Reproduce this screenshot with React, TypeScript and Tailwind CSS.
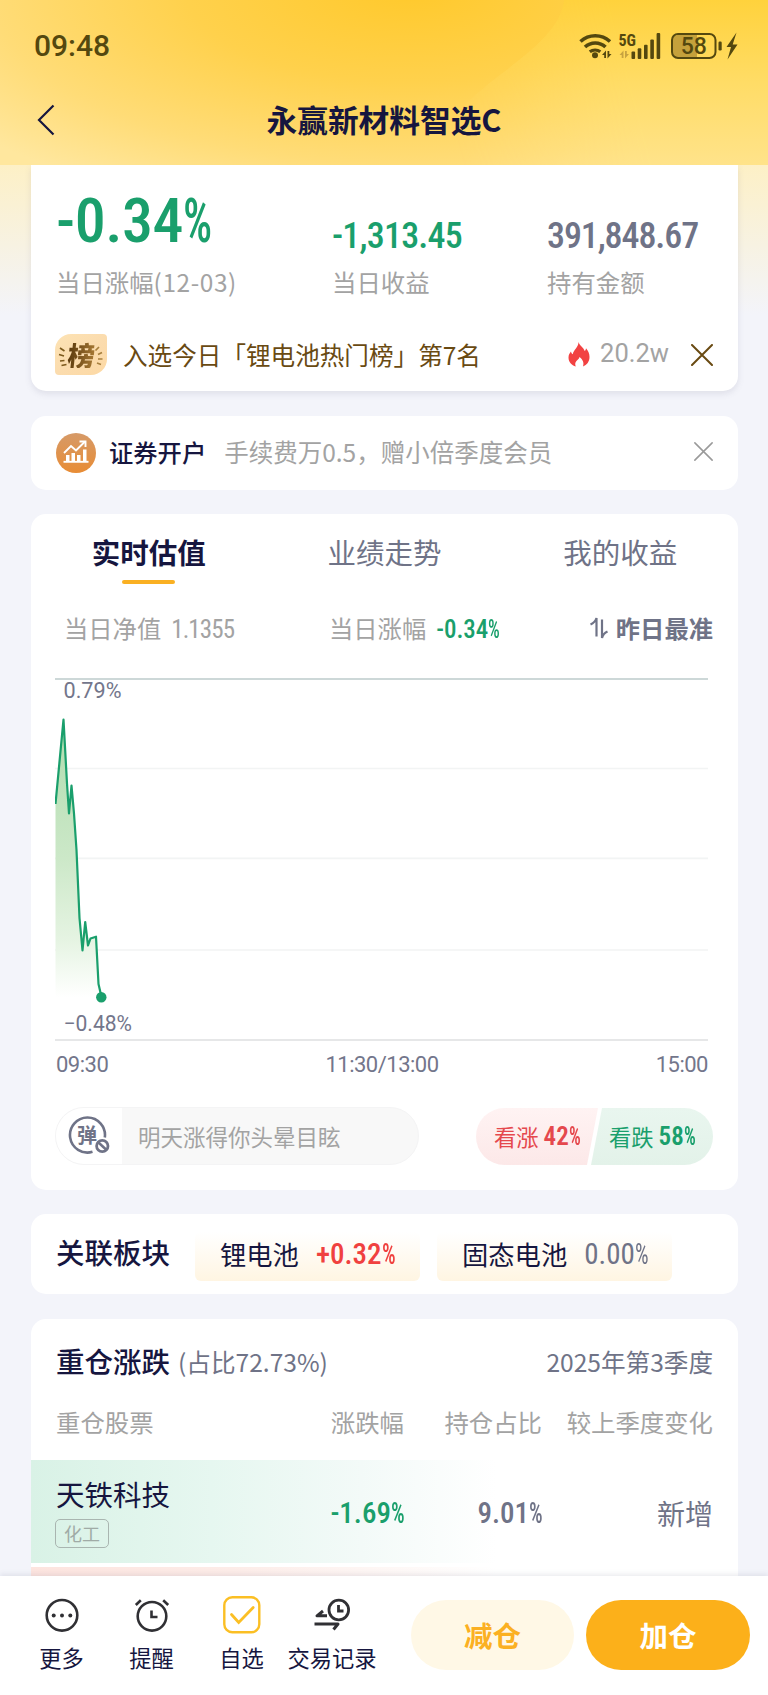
import type { ReactNode } from "react";

function StatusIcons() {
  return (
    <svg className="mb-[2px]" width="162" height="32" viewBox="576 28 162 32" fill="none">
      <g stroke="#54480f" strokeWidth="3.6">
        <path d="M580.5 40.5a22 22 0 0 1 29.5 0" />
        <path d="M585 46a15 15 0 0 1 20.5 0" />
        <path d="M589.8 50.8a8.5 8.5 0 0 1 10.5 0" strokeWidth="3.2" />
      </g>
      <circle cx="595" cy="54.3" r="3" fill="#54480f" />
      <path d="M602 54l4-4.500v7.500h-1.800v-3zM611.500 53l-4 4.500v-7.500h1.800v3z" fill="#54480f" />
      <path d="M619.500 54l4-4.500v7.500h-1.800v-3zM629 53l-4 4.500v-7.500h1.800v3z" fill="#c7a340" />
      <text x="618.500" y="45" fontSize="17" fontWeight="700" fontFamily="Roboto Condensed" fill="#54480f" textLength="17.500" lengthAdjust="spacingAndGlyphs">5G</text>
      <g fill="#54480f">
        <rect x="631.500" y="50.500" width="3.600" height="7.500" rx="1" />
        <rect x="637.700" y="47.300" width="3.600" height="10.700" rx="1" />
        <rect x="644" y="43.800" width="3.600" height="14.200" rx="1" />
        <rect x="650.300" y="38.500" width="3.600" height="19.500" rx="1" />
        <rect x="656.600" y="32" width="3.600" height="26" rx="1" />
      </g>
      <path d="M678 34h19v23h-19a5.500 5.500 0 0 1-5.500-5.500v-12a5.500 5.500 0 0 1 5.500-5.500z" fill="#c5a13b" />
      <rect x="672" y="33" width="43.500" height="24" rx="6" stroke="#54480f" strokeWidth="2" />
      <rect x="718.500" y="40.500" width="3.200" height="9" rx="1.200" fill="#54480f" />
      <text x="693.800" y="53.300" fontSize="23" fontWeight="500" fontFamily="Roboto" fill="#54480f" textAnchor="middle" textLength="26">58</text>
      <path d="M736.500 31.500l-10 14.500h4.500l-3.500 12.500 10-15h-4.800z" fill="#54480f" />
    </svg>
  );
}

function Cross({ className }: { className: string }) {
  return (
    <svg className={className} viewBox="0 0 22 22" fill="none" stroke="currentColor" strokeLinecap="round">
      <path d="M1 1l20 20M21 1L1 21" />
    </svg>
  );
}

function Percent() {
  return <span className="inline-block w-[0.45em] origin-left scale-x-[.74] tracking-normal">%</span>;
}

function RankBadge() {
  return (
    <div className="relative flex h-[41px] w-[52px] items-center justify-center rounded-tl-[16px] rounded-tr-[4px] rounded-br-[16px] rounded-bl-[4px] bg-linear-to-br from-[#fde3b4] via-[#fbdcae] to-[#fdd9a4]">
      <svg className="absolute inset-0" width="52" height="41" viewBox="0 0 52 41" stroke="#7d5a1c" strokeWidth="1.700" fill="none">
        <path d="M5 14l4.500 3M4 20.500l5 1.500M5 27l4.500-.5M6.500 31.500l5-1" />
        <path stroke="#a8803f" d="M44 13l-3.500 3.500M47 18.500l-4 2M47.500 25h-4.500M46 30.500l-4-1.500" />
      </svg>
      <span className="relative -skew-x-6 bg-linear-to-r from-[#5b3a0c] to-[#a87a35] bg-clip-text text-[27px] leading-none font-black text-transparent">榜</span>
    </div>
  );
}

function Flame() {
  return (
    <svg width="22" height="25" viewBox="0 0 22 25">
      <path d="M10.500 0c1 3.500 5 5.500 6.200 9 .9-.5 1.200-1.500 1.300-2.700 2.200 2.300 3.500 5.500 3.500 8.700 0 4.500-2.600 8-6.500 9.500 1.300-3.800-.2-6.800-3.500-9.500-.2 2-3.200 3.200-4 5.500-.5 1.400-.2 2.800.3 4C3.600 23.300.5 20 .5 15.500c0-3 1.300-4.500 2.500-6 .3 1.500.8 2.300 1.800 2.800C5.500 7.500 10.500 5.500 10.500 0z" fill="#f24242" />
    </svg>
  );
}

function BrokerIcon() {
  return (
    <svg width="40" height="40" viewBox="0 0 40 40">
      <defs>
        <linearGradient id="broker" x1="0.500" y1="0" x2="0.500" y2="1">
          <stop offset="0" stopColor="#d69a68" />
          <stop offset="1" stopColor="#e88c35" />
        </linearGradient>
      </defs>
      <circle cx="20" cy="20" r="20" fill="url(#broker)" />
      <g fill="none" stroke="#fff" strokeWidth="1.900">
        <path d="M8 20l7-7 5 4.500 9-9" />
        <path d="M23.500 8.500h6V14" />
        <path d="M7.500 28.800h25" />
      </g>
      <path d="M10 22h3.500v6.500H10zM15.500 20H19v8.500h-3.500zM21 22h3.500v6.500H21zM27 16.500h3.500v12H27z" fill="#fff" />
    </svg>
  );
}

function ValuationChart() {
  const points = "55.500 804L63.500 719.500L67 783.500L69 813.500L71.500 785.500L74 813.500L76.500 850L79.500 918L82.500 950.500L85.200 922L88 945.500L90.500 938.500L96 936.700L98.500 984L101.500 997";
  return (
    <svg className="block" width="654" height="364" viewBox="55 678 654 364" fill="none">
      <defs>
        <linearGradient id="area" x1="0" y1="720" x2="0" y2="997" gradientUnits="userSpaceOnUse">
          <stop offset="0" stopColor="#b0dcae" />
          <stop offset="0.500" stopColor="#cce8c8" />
          <stop offset="0.800" stopColor="#e6f4e3" />
          <stop offset="1" stopColor="#fff" />
        </linearGradient>
      </defs>
      <path d="M55 679H708" stroke="#cdd8d8" strokeWidth="2" />
      <path d="M55 768.500H708M55 858.300H708M55 950H708" stroke="#f2f4f4" strokeWidth="1.700" />
      <path d="M55 1040H708" stroke="#e6e7e8" strokeWidth="2" />
      <path d={`M${points}H55.500Z`} fill="url(#area)" />
      <path d={`M${points}`} stroke="#1a9f6c" strokeWidth="2.200" strokeLinejoin="round" />
      <circle cx="101.300" cy="997.300" r="5.200" fill="#1a9f6c" />
      <g fontFamily="Roboto" fontSize="22" fill="#73768b">
        <text x="63.500" y="698.300" textLength="58" lengthAdjust="spacingAndGlyphs">0.79%</text>
        <text x="63.500" y="1031" textLength="68.500" lengthAdjust="spacingAndGlyphs">−0.48%</text>
      </g>
    </svg>
  );
}

function BarrageIcon() {
  return (
    <div className="relative flex size-[40px] items-center justify-center">
      <svg className="absolute inset-0" width="42" height="40" viewBox="0 0 42 40" fill="none" stroke="#6f7387">
        <path d="M36.800 21.500A17.500 17.500 0 1 0 24.500 35.800" strokeWidth="2.600" />
        <circle cx="34.300" cy="30" r="5.700" strokeWidth="2.800" />
        <path d="M30.500 26.500l7.500 7" strokeWidth="2.500" />
      </svg>
      <span className="relative -top-px -left-px text-[20px] leading-none font-bold text-[#6f7387]">弹</span>
    </div>
  );
}

function Card({ className, children }: { className: string; children: ReactNode }) {
  return <section className={`mr-[30px] ml-[31px] rounded-[15px] bg-white ${className}`}>{children}</section>;
}

function Stat({ label, value, valueClass }: { label: ReactNode; value: ReactNode; valueClass: string }) {
  return (
    <div>
      <div className={`flex h-[102px] items-center font-['Roboto_Condensed'] leading-none font-medium ${valueClass}`}>{value}</div>
      <div className="text-[24.4px] leading-[30px] text-[#a3a3a3]">{label}</div>
    </div>
  );
}

function Tool({ label, className, children }: { label: string; className: string; children: ReactNode }) {
  return (
    <div className={`flex flex-col items-center ${className}`}>
      <div className="flex h-[40px] items-center justify-center">{children}</div>
      <span className="mt-[6px] text-[22.3px] leading-[32px] whitespace-nowrap text-[#16163f]">{label}</span>
    </div>
  );
}

export default function App() {
  return (
    <div className="flex h-[1695px] w-[768px] flex-col overflow-hidden bg-[#f3f4fa] font-['Noto_Sans_CJK_SC','Noto_Sans',sans-serif]">
      <header className="relative h-[165px] shrink-0 bg-[radial-gradient(ellipse_560px_230px_at_410px_-10px,#ffc92c_0%,#ffd14c_40%,#ffdc77_75%,#ffe79e_100%)]">
        <svg className="absolute inset-0" width="768" height="165" viewBox="0 0 768 165">
          <defs>
            <linearGradient id="sheen" x1="600" y1="0" x2="600" y2="165" gradientUnits="userSpaceOnUse">
              <stop offset="0" stopColor="#ffd23c" />
              <stop offset="0.500" stopColor="#ffdc66" />
              <stop offset="1" stopColor="#ffe38a" />
            </linearGradient>
            <linearGradient id="sheenFade" x1="440" y1="90" x2="620" y2="40" gradientUnits="userSpaceOnUse">
              <stop offset="0" stopColor="#fff" stopOpacity="0" />
              <stop offset="1" stopColor="#fff" />
            </linearGradient>
            <mask id="sheenMask">
              <rect width="768" height="165" fill="url(#sheenFade)" />
            </mask>
          </defs>
          <path d="M564 0C560 40 500 70 470 100C450 120 430 145 420 165H768V0Z" fill="url(#sheen)" mask="url(#sheenMask)" />
        </svg>
        <div className="relative flex h-[92px] items-center justify-between pr-[30px] pl-[34px]">
          <span className="font-['Roboto'] text-[30px] leading-none font-medium text-[#54480f]">09:48</span>
          <StatusIcons />
        </div>
        <div className="relative flex h-[56px] items-center justify-center">
          <svg className="absolute left-[37px]" width="18" height="32" viewBox="0 0 18 32" fill="none" stroke="#16163f" strokeWidth="2.200">
            <path d="M16.500 1.500L2 16l14.500 14.500" />
          </svg>
          <h1 className="mb-[2px] text-[30.700px] leading-none font-bold text-[#16163f]">永赢新材料智选C</h1>
        </div>
      </header>

      <main className="min-h-0 flex-1 overflow-hidden bg-[linear-gradient(180deg,#fdf0c6_0px,#f7f2e2_80px,#f3f4fa_150px)]">
        <Card className="h-[226px] rounded-t-none shadow-[0_3px_6px_rgba(90,95,120,0.13)]">
          <div className="grid grid-cols-[276px_215px_1fr] pl-[25px]">
            <Stat
              label={<>当日涨幅<span className="tracking-[0.600px]">(12-03)</span></>}
              value={<>-0.34<Percent /></>}
              valueClass="pt-[9px] text-[62px] tracking-[-0.500px] text-[#1a9f6c]"
            />
            <Stat label="当日收益" value="-1,313.45" valueClass="pt-[39px] text-[36px] tracking-[-0.800px] text-[#1a9f6c]" />
            <Stat label="持有金额" value="391,848.67" valueClass="pt-[39px] text-[36px] tracking-[-1.100px] text-[#6f7387]" />
          </div>
          <div className="mt-[37px] flex h-[41px] items-center pr-[25px] pl-[24px]">
            <RankBadge />
            <span className="mb-[2px] ml-[16px] text-[24.600px] leading-[30px] whitespace-nowrap text-[#694a12]">入选今日「锂电池热门榜」第7名</span>
            <div className="ml-auto flex items-center">
              <Flame />
              <span className="mb-[2px] ml-[10px] font-['Roboto'] text-[25.500px] leading-none text-[#a3a3a3]">20.2w</span>
              <Cross className="ml-[22px] size-[22px] stroke-2 text-[#694a12]" />
            </div>
          </div>
        </Card>

        <Card className="mt-[25px] flex h-[74px] items-center pr-[25px] pl-[25px]">
          <BrokerIcon />
          <span className="mb-[2px] ml-[13px] text-[24.300px] leading-none font-medium text-[#16163f]">证券开户</span>
          <span className="mb-[2px] ml-[18px] text-[24.500px] leading-none text-[#a3a3a3]">手续费万0.5，赠小倍季度会员</span>
          <Cross className="mb-[3px] ml-auto size-[19px] text-[#9a9a9a] stroke-[1.800]" />
        </Card>

        <Card className="mt-[24px] h-[676px]">
          <nav className="grid h-[70px] grid-cols-3 text-[28.500px] leading-[76px] text-[#6f7387]">
            <div className="flex flex-col items-center">
              <span className="h-[66px] font-bold text-[#16163f]">实时估值</span>
              <i className="h-[4px] w-[53px] shrink-0 rounded-full bg-[#fab022]" />
            </div>
            <div className="text-center">业绩走势</div>
            <div className="text-center">我的收益</div>
          </nav>
          <div className="grid h-[88px] grid-cols-[265px_1fr_auto] items-center pr-[25px] pl-[33px] text-[24.300px] leading-none text-[#a3a3a3]">
            <div className="flex items-center">
              当日净值<span className="mt-[2px] ml-[10px] font-['Roboto_Condensed'] text-[25px] tracking-[-0.900px]">1.1355</span>
            </div>
            <div className="flex items-center">
              当日涨幅<span className="mt-[2px] ml-[10px] font-['Roboto_Condensed'] text-[25px] font-medium text-[#1a9f6c]">-0.34<Percent /></span>
            </div>
            <div className="flex items-center font-bold text-[#6f7387]">
              <svg className="mr-[7px]" width="20" height="24" viewBox="0 0 20 24" fill="none" stroke="#6f7387" strokeWidth="2.200">
                <path d="M1.500 8.500Q6 6.500 7.500 2V20.500M13 3.500V22Q14 17.500 18.500 15.500" strokeLinejoin="bevel" />
              </svg>
              昨日最准
            </div>
          </div>
          <div className="mt-[6px] pl-[24px]">
            <ValuationChart />
          </div>
          <div className="mr-[30px] ml-[25px] flex h-[46px] items-center justify-between font-['Roboto'] text-[22px] leading-none tracking-[-0.500px] text-[#73768b]">
            <span>09:30</span>
            <span>11:30/13:00</span>
            <span>15:00</span>
          </div>
          <div className="mt-[19px] flex items-center justify-between pr-[25px] pl-[24px]">
            <div className="flex h-[58px] w-[364px] items-center overflow-hidden rounded-full border border-[#f4f4f5] bg-[#f8f8f8]">
              <div className="flex h-full w-[66px] items-center bg-white pl-[12px]">
                <BarrageIcon />
              </div>
              <span className="ml-[16px] text-[22.500px] leading-none text-[#a3a3a3]">明天涨得你头晕目眩</span>
            </div>
            <div className="relative flex h-[57px] w-[237px] items-center overflow-hidden rounded-full text-[22.300px] leading-none">
              <svg className="absolute inset-0" width="237" height="57" viewBox="0 0 237 57">
                <defs>
                  <linearGradient id="up" x1="0" y1="0" x2="0" y2="1">
                    <stop offset="0" stopColor="#fff3f3" />
                    <stop offset="1" stopColor="#fce8e8" />
                  </linearGradient>
                  <linearGradient id="down" x1="0" y1="0" x2="0" y2="1">
                    <stop offset="0" stopColor="#e9f6ef" />
                    <stop offset="1" stopColor="#e3f2e9" />
                  </linearGradient>
                </defs>
                <path d="M0 0H122L111 57H0z" fill="url(#up)" />
                <path d="M126 0H237V57H115z" fill="url(#down)" />
              </svg>
              <div className="relative ml-[18px] flex w-[115px] items-center text-[#e5484d]">
                看涨<span className="mt-px ml-[5px] font-['Roboto_Condensed'] text-[25px] font-semibold">42<Percent /></span>
              </div>
              <div className="relative flex items-center text-[#1a9f6c]">
                看跌<span className="mt-px ml-[5px] font-['Roboto_Condensed'] text-[25px] font-semibold">58<Percent /></span>
              </div>
            </div>
          </div>
        </Card>

        <Card className="mt-[24px] flex h-[80px] items-center pl-[25px] text-[26.300px] leading-none text-[#16163f]">
          <span className="pb-[4px] text-[28.500px] font-medium">关联板块</span>
          <div className="mt-[5px] ml-[25px] flex h-[49px] w-[225px] items-center rounded-[6px] bg-linear-to-b from-white to-[#fff5e2] pb-[5px] pl-[25px]">
            锂电池<span className="ml-[17px] font-['Roboto_Condensed'] text-[29px] font-medium text-[#f0413f]">+0.32<Percent /></span>
          </div>
          <div className="mt-[5px] ml-[17px] flex h-[49px] w-[235px] items-center rounded-[6px] bg-linear-to-b from-white to-[#fff5e2] pb-[5px] pl-[25px]">
            固态电池<span className="ml-[17px] font-['Roboto_Condensed'] text-[29px] text-[#6f7387]">0.00<Percent /></span>
          </div>
        </Card>

        <Card className="mt-[25px] h-[300px]">
          <div className="flex h-[84px] items-center pr-[25px] pl-[25px] text-[24.600px] leading-none text-[#6f7387]">
            <span className="text-[28.500px] font-medium text-[#16163f]">重仓涨跌</span>
            <span className="ml-[8px]">(占比72.73%)</span>
            <span className="ml-auto">2025年第3季度</span>
          </div>
          <div className="grid h-[57px] grid-cols-[348px_138px_171px] pt-[4px] pl-[25px] text-right text-[24.400px] leading-[30px] text-[#a3a3a3]">
            <div className="flex justify-between">
              <span>重仓股票</span>
              <span>涨跌幅</span>
            </div>
            <span>持仓占比</span>
            <span>较上季度变化</span>
          </div>
          <div className="grid h-[103px] grid-cols-[348px_138px_171px] items-center bg-[linear-gradient(90deg,#d9f2e6_0px,#e6f7f0_180px,#f3faf8_330px,#ffffff_465px)] pl-[25px] text-right">
            <div className="flex items-center justify-between">
              <div className="flex flex-col items-start">
                <span className="-mt-px text-[28.500px] leading-[40px] text-[#16163f]">天铁科技</span>
                <span className="mt-[5px] -ml-px h-[29px] w-[54px] rounded-[5px] border border-[#a9b5b0] text-center text-[18px] leading-[26px] text-[#a0aba6]">化工</span>
              </div>
              <span className="mt-[4px] font-['Roboto_Condensed'] text-[29px] leading-none font-medium text-[#1a9f6c]">-1.69<Percent /></span>
            </div>
            <span className="mt-[4px] font-['Roboto_Condensed'] text-[29px] leading-none font-medium text-[#6f7387]">9.01<Percent /></span>
            <span className="mt-[2px] text-[28px] leading-none text-[#6f7387]">新增</span>
          </div>
          <div className="mt-[4px] h-[40px] bg-[linear-gradient(90deg,#fde4df_0px,#fdece8_200px,#ffffff_465px)]" />
        </Card>
      </main>

      <footer className="relative flex h-[119px] shrink-0 items-start bg-white pt-[19px] shadow-[0_-2px_5px_rgba(90,95,120,0.12)]">
        <Tool label="更多" className="ml-[31px] w-[61px]">
          <svg width="36" height="36" viewBox="0 0 36 36" fill="none" stroke="#303034">
            <circle cx="18" cy="18.300" r="15.300" strokeWidth="2.600" />
            <g fill="#303034" stroke="none">
              <circle cx="9.700" cy="18.500" r="2" />
              <circle cx="18" cy="18.500" r="2" />
              <circle cx="26.300" cy="18.500" r="2" />
            </g>
          </svg>
        </Tool>
        <Tool label="提醒" className="ml-[29px] w-[61px]">
          <svg width="36" height="36" viewBox="0 0 36 36" fill="none" stroke="#303034" strokeWidth="2.600">
            <circle cx="18" cy="19.300" r="14.300" />
            <path d="M17.500 13.500v6.500h6M1.800 8l5-4.800M34.200 8l-5-4.800" />
          </svg>
        </Tool>
        <Tool label="自选" className="ml-[29px] w-[61px]">
          <svg width="40" height="40" viewBox="0 0 40 40" fill="none" stroke="#fbbf24" strokeWidth="2.400">
            <rect x="2.300" y="2.300" width="35" height="35" rx="8" />
            <path d="M9.500 19.500l7.200 8 14.500-15" strokeWidth="2.800" strokeLinecap="round" />
          </svg>
        </Tool>
        <Tool label="交易记录" className="ml-[15px] w-[90px]">
          <svg width="38" height="36" viewBox="0 0 38 36" fill="none" stroke="#303034" strokeWidth="2.800">
            <circle cx="25.800" cy="13" r="9.800" />
            <path d="M25.500 8v6h5" />
            <path d="M14 18.800H4L10 14M1.500 27H25L20.500 32.500" strokeLinejoin="round" strokeWidth="3" />
          </svg>
        </Tool>
        <button className="mt-[5px] ml-[34px] h-[70px] w-[163px] rounded-full bg-[#fff8e6] text-[28.500px] leading-none font-bold text-[#fbb022]">减仓</button>
        <button className="mt-[5px] ml-[12px] h-[70px] w-[164px] rounded-full bg-[#fcb01a] text-[28.500px] leading-none font-bold text-white">加仓</button>
      </footer>
    </div>
  );
}
